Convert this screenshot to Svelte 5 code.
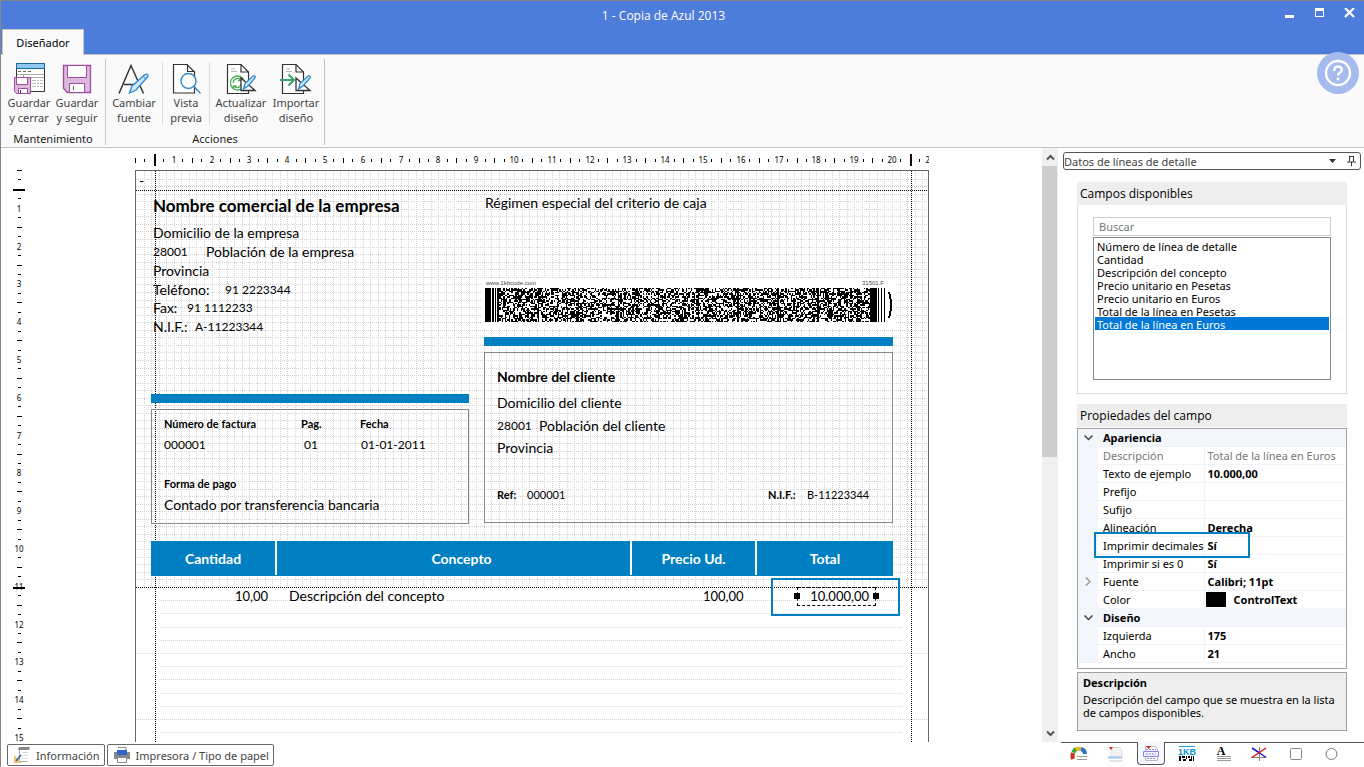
<script>
  import { onMount } from 'svelte';

  // A4 sheet at 96 dpi, all sheet coordinates are in px from its top left corner
  const CM = 37.8;
  const GRID = CM / 5;
  const SHEET_WIDTH = 794;
  const HEADER_END = 417;
  const BAND_STEP = 13.2;

  function ticks(count, margins) {
    const list = [];
    for (let i = 0; i <= count * 4; i++) {
      const pos = Math.round((i * CM) / 4);
      if (i > 0 && i % 4 === 0) {
        list.push({ pos, type: 'number', text: i / 4 });
      } else if (margins.includes(i)) {
        list.push({ pos, type: 'margin' });
      } else {
        list.push({ pos, type: i % 2 ? 'minor' : 'major' });
      }
    }
    return list;
  }

  const rulerX = ticks(21, [2, 82]);
  // the vertical ruler marks the end of the header at 11 cm as well
  const rulerY = [...ticks(22, [2]), { pos: HEADER_END, type: 'margin' }];

  const gridX = Array.from({ length: 105 }, (_, i) => Math.round((i + 1) * GRID));
  const gridY = Array.from({ length: 55 }, (_, i) => Math.round((i + 1) * GRID));
  const bands = Array.from({ length: 40 }, (_, i) => ({
    y: HEADER_END + Math.round((i + 1) * BAND_STEP),
    full: (i + 1) % 5 === 0
  }));

  // x, centre y, text and style of every field placed on the sheet
  const fields = [
    { x: 4, y: 11, text: '-' },
    { x: 18, y: 36, text: 'Nombre comercial de la empresa', kind: 'title' },
    { x: 350, y: 33, text: 'Régimen especial del criterio de caja' },
    { x: 18, y: 63, text: 'Domicilio de la empresa' },
    { x: 18, y: 82, text: '28001', kind: 'number' },
    { x: 71, y: 82, text: 'Población de la empresa' },
    { x: 18, y: 101, text: 'Provincia' },
    { x: 18, y: 120, text: 'Teléfono:' },
    { x: 90, y: 120, text: '91 2223344', kind: 'number' },
    { x: 18, y: 138, text: 'Fax:' },
    { x: 52, y: 138, text: '91 1112233', kind: 'number' },
    { x: 18, y: 157, text: 'N.I.F.:' },
    { x: 60, y: 157, text: 'A-11223344', kind: 'number' },
    { x: 29, y: 254, text: 'Número de factura', kind: 'label' },
    { x: 166, y: 254, text: 'Pag.', kind: 'label' },
    { x: 225, y: 254, text: 'Fecha', kind: 'label' },
    { x: 29, y: 275, text: '000001', kind: 'number' },
    { x: 169, y: 275, text: '01', kind: 'number' },
    { x: 226, y: 275, text: '01-01-2011', kind: 'number' },
    { x: 29, y: 314, text: 'Forma de pago', kind: 'label' },
    { x: 29, y: 335, text: 'Contado por transferencia bancaria' },
    { x: 362, y: 207, text: 'Nombre del cliente', kind: 'name' },
    { x: 362, y: 233, text: 'Domicilio del cliente' },
    { x: 362, y: 256, text: '28001', kind: 'number' },
    { x: 404, y: 256, text: 'Población del cliente' },
    { x: 362, y: 278, text: 'Provincia' },
    { x: 362, y: 325, text: 'Ref:', kind: 'label' },
    { x: 392, y: 325, text: '000001', kind: 'small' },
    { x: 633, y: 325, text: 'N.I.F.:', kind: 'label' },
    { x: 672, y: 325, text: 'B-11223344', kind: 'small' },
    { x: 100, y: 426, text: '10,00', kind: 'amount' },
    { x: 154, y: 426, text: 'Descripción del concepto' },
    { x: 568, y: 426, text: '100,00', kind: 'amount' }
  ];

  // 1KB code: framed blocks of random modules
  function barcodePath(cols, rows) {
    let seed = 31501;
    let d = '';
    for (let c = 0; c < cols; c++) {
      for (let r = 0; r < rows; r++) {
        seed = (seed * 1103515245 + 12345) % 2147483648;
        const on = c % 30 === 0 || (seed / 2147483648) < 0.53;
        if (on) d += `M${c} ${r}h1v1h-1z`;
      }
    }
    return d;
  }
  const barcode = barcodePath(280, 25);

  const available = [
    'Número de línea de detalle',
    'Cantidad',
    'Descripción del concepto',
    'Precio unitario en Pesetas',
    'Precio unitario en Euros',
    'Total de la línea en Pesetas',
    'Total de la línea en Euros'
  ];
  let selected = 'Total de la línea en Euros';
  let search = '';

  const properties = [
    { group: 'Apariencia' },
    { name: 'Descripción', value: 'Total de la línea en Euros', readonly: true },
    { name: 'Texto de ejemplo', value: '10.000,00' },
    { name: 'Prefijo', value: '' },
    { name: 'Sufijo', value: '' },
    { name: 'Alineación', value: 'Derecha' },
    { name: 'Imprimir decimales', value: 'Sí', marked: true },
    { name: 'Imprimir si es 0', value: 'Sí' },
    { name: 'Fuente', value: 'Calibri; 11pt', nested: true },
    { name: 'Color', value: 'ControlText', swatch: true },
    { group: 'Diseño' },
    { name: 'Izquierda', value: '175' },
    { name: 'Ancho', value: '21' }
  ];

  const tools = ['color', 'page', 'detail', 'code', 'text', 'line', 'rect', 'circle'];
  const toolNames = ['Colores', 'Página', 'Líneas de detalle', 'Código 1KB', 'Texto', 'Línea', 'Rectángulo', 'Círculo'];
  let activeTool = 'detail';

  onMount(() => {
    document.documentElement.lang = 'es';
  });
</script>

{#snippet sheetIcon()}
  <path d="M2.500 2.500H16l7.500 7.500V31.500H2.500z" fill="#fff" stroke="#333" stroke-width="1.200" />
  <path d="M16 2.500V10h7.500" fill="none" stroke="#333" stroke-width="1.200" />
  <path d="M6 7h4M6 9.500h6" stroke="#bbb" />
{/snippet}

{#snippet rulerPencil()}
  <path d="M16 16V28.500h14z" fill="#fff" stroke="#333" stroke-width="1.300" />
  <path d="M18.500 27l1.500-5.500L28 14q3-.5 2 2L23 24z" fill="#cfe6f8" stroke="#2b88cf" stroke-width="1.300" />
{/snippet}

<div class="window">
  <header>
    <div class="titlebar">
      <h1>1 - Copia de Azul 2013</h1>
      <div class="controls">
        <button aria-label="Minimizar"><svg width="11" height="11"><path d="M1 7h9v3H1z" fill="#fff" /></svg></button>
        <button aria-label="Maximizar"><svg width="11" height="11"><path d="M1 0h9v9H1zM2 3v5h7V3z" fill="#fff" fill-rule="evenodd" /></svg></button>
        <button aria-label="Cerrar"><svg width="11" height="11"><path d="M1 0l9 9M10 0l-9 9" stroke="#fff" stroke-width="2.200" /></svg></button>
      </div>
    </div>
    <button class="tab">Diseñador</button>
  </header>

  <div class="ribbon">
    <section class="group">
      <div class="commands first">
        <button class="command">
          <svg viewBox="0 0 32 32">
            <path d="M3.500 1.500h28v28h-28z" fill="#fff" stroke="#333" />
            <path d="M3.500 1.500h28v5h-28z" fill="#90c8f0" stroke="#1769aa" />
            <path d="M5 9.500h3m2 0h3m2 0h3" stroke="#666" />
            <path d="M4 12.500h27M10 15.500h21M10.500 12v7" stroke="#aaa" fill="none" />
            <path d="M19 18.500h4m1 0h2m1 0h3M19 21.500h4m1 0h2m1 0h3M19 24.500h4m1 0h2m1 0h3" stroke="#bbb" />
            <path d="M1.500 15.500h16v16h-14l-2-2z" fill="#dcb8dc" stroke="#a04ca0" />
            <path d="M3.500 15.500h11v7h-11z" fill="#fff" stroke="#a04ca0" />
            <path d="M5.500 31.500v-5h9v5z" fill="#fff" stroke="#a04ca0" />
            <path d="M7.500 28v3" stroke="#333" />
          </svg>
          <span>Guardar<br />y cerrar</span>
        </button>
        <button class="command">
          <svg viewBox="0 0 32 32">
            <path d="M2.500 3.500h27v27h-23l-4-4z" fill="#dcb8dc" stroke="#a04ca0" stroke-width="1.300" />
            <path d="M6.500 3.500h19v12h-19z" fill="#fff" stroke="#a04ca0" />
            <path d="M8.500 30.500v-9h15v9z" fill="#fff" stroke="#a04ca0" />
            <path d="M12.500 24v4" stroke="#555" />
          </svg>
          <span>Guardar<br />y seguir</span>
        </button>
      </div>
      <h2>Mantenimiento</h2>
    </section>
    <section class="group">
      <div class="commands last">
        <button class="command font">
          <svg viewBox="0 0 32 32">
            <path d="M1 31.500L13 3.500l12.500 28M6 22.500h14" fill="none" stroke="#333" stroke-width="1.500" />
            <path d="M11.500 31l2.500-7L27 12.500q3.500-1.500 3 2L18 28z" fill="#cfe6f8" stroke="#2b88cf" stroke-width="1.300" />
            <path d="M25 14l3 3.500" stroke="#2b88cf" />
          </svg>
          <span>Cambiar<br />fuente</span>
        </button>
        <button class="command">
          <svg viewBox="0 0 32 32">
            <path d="M3.500 2.500H17l7.500 7.500V31H3.500z" fill="#fff" stroke="#333" stroke-width="1.200" />
            <path d="M17.500 2.500V9.500h7" fill="none" stroke="#333" stroke-width="1.200" />
            <circle cx="18.500" cy="19" r="7.500" fill="#fff" stroke="#2b88cf" stroke-width="1.400" />
            <path d="M24 24.500l6.500 7" stroke="#2b88cf" stroke-width="1.400" />
          </svg>
          <span>Vista<br />previa</span>
        </button>
        <button class="command design">
          <svg viewBox="0 0 32 32">
            {@render sheetIcon()}
            <circle cx="12.500" cy="21" r="7" fill="#fff" stroke="#4caf50" stroke-width="1.300" />
            <path d="M8 21q1-5 6-4.500l2 1.500M16 15.500V18.500h-3M16.500 22q-1.500 4-5.500 3.500L8.500 24M8.500 26.500V24h3" fill="none" stroke="#4caf50" stroke-width="1.300" />
            {@render rulerPencil()}
          </svg>
          <span>Actualizar<br />diseño</span>
        </button>
        <button class="command">
          <svg viewBox="0 0 32 32">
            {@render sheetIcon()}
            <path d="M0 18h14M8.500 12.500l5.500 5.500-5.500 5.500" fill="none" stroke="#35a56a" stroke-width="2" />
            {@render rulerPencil()}
          </svg>
          <span>Importar<br />diseño</span>
        </button>
      </div>
      <h2>Acciones</h2>
    </section>
    <button class="help" aria-label="Ayuda">
      <svg viewBox="0 0 42 42">
        <circle cx="21" cy="21" r="12" fill="none" stroke="#fff" stroke-width="2.400" />
        <path d="M17.300 19q0-4.500 3.700-4.500t3.700 3.400q0 1.800-2 3-1.700.9-1.700 2.600" fill="none" stroke="#fff" stroke-width="2.400" />
        <circle cx="21" cy="27" r="1.400" fill="#fff" />
      </svg>
    </button>
  </div>

  <div class="body">
    <main>
      <div class="workspace">
        <div class="ruler vertical">
          {#each rulerY as tick}
            <span class={tick.type} style="top: {tick.pos}px">{tick.text ?? ''}</span>
          {/each}
        </div>
        <div class="desk">
          <div class="ruler horizontal">
            {#each rulerX as tick}
              <span class={tick.type} style="left: {tick.pos}px">{tick.text ?? ''}</span>
            {/each}
          </div>
          <div class="sheet">
            <svg class="grid" width={SHEET_WIDTH} height="1122" shape-rendering="crispEdges">
              <g stroke="#d4d4d4" stroke-dasharray="1 1">
                {#each gridX as x}
                  <path d="M{x}.5 0V{HEADER_END}" />
                {/each}
                {#each gridY as y}
                  <path d="M0 {y}.5H{SHEET_WIDTH}" />
                {/each}
                {#each bands as band}
                  <path d="M{band.full ? 0 : 25} {band.y - 1}.5H{band.full ? SHEET_WIDTH : 767}" />
                {/each}
              </g>
              <g stroke="#000" stroke-dasharray="1 1">
                <path d="M0 19.500H794M0 {HEADER_END - 1}.5H794M19.500 0V1122M775.500 0V1122" />
              </g>
            </svg>

            <div class="bar" style="left: 15px; top: 223px; width: 318px"></div>
            <div class="bar" style="left: 348px; top: 166px; width: 409px"></div>
            <div class="frame" style="left: 15px; top: 238px; width: 318px; height: 115px"></div>
            <div class="frame" style="left: 348px; top: 181px; width: 409px; height: 171px"></div>

            <div class="barcode">
              <div class="barcode-text"><span>www.1kbcode.com</span><span>31501.F</span></div>
              <svg viewBox="0 0 410 34" shape-rendering="crispEdges">
                <path d="M0 0h6v34H0zM7 0h2v34H7zM10 0h1v34h-1zM12 0h1v34h-1zM385 0h7v34h-7zM393 0h1v34h-1zM396 0h1v34h-1zM399 0h1v34h-1z" />
                <g transform="translate(13 0) scale(1.33 1.36)"><path d={barcode} /></g>
                <path d="M404 4q4 13 0 26" fill="none" stroke="#000" stroke-width="2" />
              </svg>
            </div>

            <div class="columns">
              <span>Cantidad</span><span class="concept">Concepto</span><span>Precio Ud.</span><span>Total</span>
            </div>

            {#each fields as field}
              <span class="field {field.kind ?? ''}" style="left: {field.x}px; top: {field.y}px">{field.text}</span>
            {/each}

            <div class="callout"></div>
            <div class="selection">10.000,00</div>
          </div>
        </div>
        <div class="scrollbar">
          <button aria-label="Subir"><svg width="9" height="7"><path d="M1 5.500l3.500-3.500L8 5.500" fill="none" stroke="#555" stroke-width="2" /></svg></button>
          <div class="thumb"></div>
          <button aria-label="Bajar"><svg width="9" height="7"><path d="M1 1.500L4.500 5 8 1.500" fill="none" stroke="#555" stroke-width="2" /></svg></button>
        </div>
      </div>
      <footer>
        <button>
          <svg width="18" height="18">
            <path d="M6 1h11l-1 3H5z" fill="#888" />
            <path d="M6.500 4v11.500h8" fill="none" stroke="#aaa" />
            <path d="M9 6.500h6M9 9.500h6M9 12.500h6" stroke="#ddd" />
            <path d="M1 9v8h8z" fill="#f5c26b" />
            <path d="M3 15l5-6" stroke="#29628f" stroke-width="1.500" />
          </svg>
          Información
        </button>
        <button>
          <svg width="18" height="18">
            <path d="M5 1.500h8V5" fill="#fff" stroke="#888" />
            <path d="M1 6h16v7H1z" fill="#888" />
            <path d="M4 4h10v5H4z" fill="#2f66cc" />
            <path d="M4.500 11.500h9v5h-9z" fill="#fff" stroke="#888" />
          </svg>
          Impresora / Tipo de papel
        </button>
      </footer>
    </main>

    <aside>
      <div class="picker">
        <select aria-label="Sección">
          <option>Datos de líneas de detalle</option>
        </select>
        <svg width="7" height="4"><path d="M0 0h7L3.500 4z" fill="#333" /></svg>
        <button aria-label="Fijar panel"><svg width="9" height="10"><path d="M2.500 0v5.500M6.500 0v5.500M2 .5h5M0 6h9M4.500 6v4" fill="none" stroke="#333" /></svg></button>
      </div>

      <div class="panels">
        <h2>Campos disponibles</h2>
        <div class="available">
          <input type="text" placeholder="Buscar" aria-label="Buscar" bind:value={search} />
          <select size="10" aria-label="Campos disponibles" bind:value={selected}>
            {#each available as name}
              <option value={name}>{name}</option>
            {/each}
          </select>
        </div>

        <h2>Propiedades del campo</h2>
        <div class="properties">
          <table>
            <colgroup>
              <col class="gutter-col" />
              <col class="name-col" />
              <col />
            </colgroup>
            <tbody>
              {#each properties as row}
                {#if row.group}
                  <tr class="heading">
                    <td class="gutter"><button aria-label="Contraer {row.group}"><svg width="9" height="6"><path d="M.5 .5l4 4 4-4" fill="none" stroke="#444" stroke-width="1.500" /></svg></button></td>
                    <th colspan="2">{row.group}</th>
                  </tr>
                {:else}
                  <tr class:readonly={row.readonly}>
                    <td class="gutter">
                      {#if row.nested}
                        <button aria-label="Expandir {row.name}"><svg width="6" height="9"><path d="M1 .5l4 4-4 4" fill="none" stroke="#999" stroke-width="1.500" /></svg></button>
                      {/if}
                    </td>
                    <th scope="row" class:marked={row.marked}>{row.name}</th>
                    <td class="value">{#if row.swatch}<i class="swatch"></i>{/if}{row.value}</td>
                  </tr>
                {/if}
              {/each}
            </tbody>
          </table>
        </div>

        <div class="hint">
          <strong>Descripción</strong>
          <p>Descripción del campo que se muestra en la lista de campos disponibles.</p>
        </div>
      </div>

      <nav>
        {#each tools as tool, i}
          <button class:active={activeTool === tool} aria-label={toolNames[i]} onclick={() => (activeTool = tool)}>
            <svg width="18" height="16" viewBox="0 0 18 16">
              {#if tool === 'color'}
                <path d="M3 13q-1-3 0-6" fill="none" stroke="#d9261c" stroke-width="4" />
                <path d="M3 6.500l3-4" stroke="#35a53f" stroke-width="4" />
                <path d="M6 3.500q3-1.500 5 0" fill="none" stroke="#f0b51d" stroke-width="4" />
                <path d="M11 3q4 1 4 5" fill="none" stroke="#2c74c9" stroke-width="4" />
                <path d="M7 10.500h10M7 13.500h10" stroke="#999" />
              {:else if tool === 'page'}
                <path d="M5 1.500h9l2 3v7H5z" fill="#f2f2f2" stroke="#ddd" />
                <path d="M3 1h4L5 4z" fill="#d9261c" />
                <path d="M2 11.500h14" stroke="#9cc6f0" stroke-width="2" />
                <path d="M3 15h14" stroke="#ccc" />
              {:else if tool === 'detail'}
                <path d="M3.500 15.500V1.500h10l2 3v11z" fill="#fff" stroke="#bbb" />
                <path d="M4 1h5L6.500 4z" fill="#d9261c" />
                <path d="M1.500 6.500h15v5h-15z" fill="#f4f2ff" stroke="#8a84e8" />
                <path d="M4 4.500h10M4 9h10M5 13.500h9" stroke="#8a84e8" stroke-dasharray="2 1" />
              {:else if tool === 'code'}
                <path d="M1 .5h16" stroke="#19a5dc" />
                <text x="9" y="9" text-anchor="middle">1KB</text>
                <path d="M1 10h2v5H1zM4 10h3v2H4zM5 13h3v2H5zM8 10h1v3H8zM10 10h2v2h-2zM11 13h3v2h-3zM13 10h1v3h-1zM15 10h1v5h-1z" />
              {:else if tool === 'text'}
                <text class="letter" x="7" y="9" text-anchor="middle">A</text>
                <path d="M3 10.500h14M3 12.500h14M3 14.500h14" stroke="#999" />
              {:else if tool === 'line'}
                <path d="M9.500 1v14M1 11.500h15" stroke="#888" />
                <path d="M2 2l7 4.500" stroke="#1414e0" stroke-width="1.500" />
                <path d="M9 6.500l7 5" stroke="#1414e0" stroke-width="1.500" />
                <path d="M16 2L2 11.500" stroke="#e01414" stroke-width="1.500" />
              {:else if tool === 'rect'}
                <rect x="4.500" y="2.500" width="11" height="11" rx="1" fill="#fff" stroke="#888" />
              {:else}
                <circle cx="9.500" cy="8" r="5.500" fill="#fff" stroke="#777" />
              {/if}
            </svg>
          </button>
        {/each}
      </nav>
    </aside>
  </div>
</div>

<style>
  :global(body) {
    margin: 0;
    background: #fff;
  }

  .window {
    display: flex;
    flex-direction: column;
    box-sizing: border-box;
    height: 100vh;
    border: solid #868686;
    border-width: 1px 0 0 1px;
    font-family: 'Noto Sans', 'Open Sans', sans-serif;
    font-size: 11px;
    color: #000;
    overflow: hidden;
  }

  button {
    padding: 0;
    border: 0;
    background: none;
    font: inherit;
    color: inherit;
  }

  h1,
  h2 {
    margin: 0;
    font-weight: normal;
  }

  svg {
    display: block;
    flex: none;
  }

  /* title bar */
  header {
    background: #4d7cdb;
  }

  .titlebar {
    display: flex;
    height: 28px;
    color: #fff;
  }

  .titlebar h1 {
    flex: 1;
    padding-left: 52px;
    font-family: 'Open Sans', sans-serif;
    font-size: 12px;
    line-height: 29px;
    text-align: center;
  }

  .controls {
    display: flex;
    height: 24px;
  }

  .controls button {
    display: grid;
    place-items: center;
    width: 30px;
  }

  .tab {
    position: relative;
    z-index: 1;
    display: block;
    width: 82px;
    height: 26px;
    margin: 0 0 -1px 1px;
    border: 1px solid #c8c8c8;
    border-bottom: 0;
    background: #fafafa;
    color: #000;
  }

  /* ribbon */
  .ribbon {
    position: relative;
    display: flex;
    border: solid #c4c4c4;
    border-width: 1px 0;
    background: #fafafa;
  }

  .group {
    margin: 4px 0 2px;
    border-right: 1px solid #c4c4c4;
  }

  .group h2 {
    font-size: 11px;
    line-height: 12px;
    text-align: center;
    color: #222;
  }

  .commands {
    display: flex;
    padding: 3px 0 8px;
  }

  .commands.first {
    padding-left: 4px;
    padding-right: 4px;
  }

  .commands.last {
    padding-right: 4px;
  }

  .command {
    display: flex;
    flex-direction: column;
    align-items: center;
    gap: 1px;
    width: 48px;
    line-height: 15px;
    color: #444;
  }

  .command svg {
    width: 32px;
    height: 32px;
  }

  .command.font {
    width: 56px;
    box-shadow: 1px 0 #dcdcdc;
  }

  .command.design {
    width: 62px;
    box-shadow: -1px 0 #dcdcdc;
  }

  .help {
    position: absolute;
    top: -3px;
    right: 5px;
    width: 42px;
    height: 42px;
    border-radius: 50%;
    background: #a6bbed;
  }

  /* design area */
  .body {
    display: flex;
    flex: 1;
    min-height: 0;
  }

  main {
    display: flex;
    flex: 1;
    flex-direction: column;
    min-width: 0;
  }

  .workspace {
    display: flex;
    flex: 1;
    min-height: 0;
  }

  .ruler {
    position: relative;
    overflow: hidden;
    font-size: 8px;
    line-height: 10px;
  }

  .ruler span {
    position: absolute;
    background: #000;
  }

  .ruler .number {
    background: none;
  }

  .vertical {
    width: 24px;
    margin-top: 22px;
  }

  .vertical span {
    left: 16px;
    width: 5px;
    height: 1px;
  }

  .vertical .minor {
    left: 17px;
    width: 3px;
  }

  .vertical .margin {
    left: 12px;
    width: 12px;
    height: 2px;
  }

  .vertical .number {
    left: 12px;
    width: 12px;
    height: 10px;
    margin-top: -4px;
    text-align: center;
  }

  .desk {
    display: flex;
    flex: 1;
    flex-direction: column;
    align-items: center;
    padding-right: 3px;
    overflow: hidden;
  }

  .horizontal {
    flex: none;
    width: 794px;
    height: 14px;
    margin: 6px 0 2px;
  }

  .horizontal span {
    top: 4px;
    width: 1px;
    height: 5px;
  }

  .horizontal .minor {
    top: 5px;
    height: 3px;
  }

  .horizontal .margin {
    top: 0;
    width: 2px;
    height: 12px;
  }

  .horizontal .number {
    top: 1px;
    width: 12px;
    height: 10px;
    margin-left: -5px;
    text-align: center;
  }

  .sheet {
    position: relative;
    flex: none;
    box-sizing: border-box;
    width: 794px;
    height: 1123px;
    border: 1px solid #666;
    font-family: Lato, 'Open Sans', sans-serif;
    font-size: 14px;
  }

  .grid {
    position: absolute;
    max-width: 100%;
  }

  .bar {
    position: absolute;
    height: 9px;
    background: #0080c3;
  }

  .frame {
    position: absolute;
    box-sizing: border-box;
    border: 1px solid #888;
  }

  .barcode {
    position: absolute;
    left: 346px;
    top: 108px;
    width: 414px;
    height: 49px;
    background: #fff;
  }

  .barcode svg {
    width: 410px;
    height: 34px;
    margin-left: 3px;
  }

  .barcode-text {
    display: flex;
    justify-content: space-between;
    padding: 0 12px 0 4px;
    font: 6px/9px 'Liberation Sans', sans-serif;
    color: #444;
  }

  .columns {
    position: absolute;
    left: 15px;
    top: 370px;
    display: grid;
    grid-template-columns: 124px 353px 123px 136px;
    gap: 2px;
    background: linear-gradient(#0080c3, #0080c3) bottom / 100% 1px no-repeat #fff;
    font-weight: bold;
    line-height: 35px;
    text-align: center;
    color: #fff;
  }

  .columns span {
    background: #0080c3;
  }

  .columns .concept {
    padding-left: 16px;
  }

  .field {
    position: absolute;
    margin: -11px 0 0 -1px;
    line-height: 20px;
    white-space: pre;
  }

  .field.title {
    font-size: 17px;
    font-weight: bold;
  }

  .field.name {
    font-weight: bold;
  }

  .field.number {
    font-size: 12px;
  }

  .field.amount {
    font-size: 13px;
  }

  .field.label {
    font-size: 11px;
    font-weight: bold;
  }

  .field.small {
    font-size: 11px;
  }

  .callout {
    position: absolute;
    left: 635px;
    top: 407px;
    width: 125px;
    height: 34px;
    border: 2px solid #0080c3;
  }

  .selection {
    position: absolute;
    left: 661px;
    top: 416px;
    box-sizing: border-box;
    width: 79px;
    height: 19px;
    padding-right: 6px;
    border: 1px dashed #000;
    font-size: 13px;
    line-height: 17px;
    text-align: right;
  }

  .selection::before,
  .selection::after {
    position: absolute;
    top: 5px;
    left: -4px;
    width: 6px;
    height: 6px;
    background: #000;
    content: '';
  }

  .selection::after {
    right: -4px;
    left: auto;
  }

  .scrollbar {
    display: flex;
    flex-direction: column;
    width: 16px;
    background: #f0f0f0;
  }

  .scrollbar button {
    display: grid;
    place-items: center;
    height: 18px;
  }

  .thumb {
    height: 49%;
    margin: 0 1px auto 0;
    background: #cdcdcd;
  }

  footer {
    display: flex;
    gap: 2px;
    padding: 2px 0 1px 6px;
    color: #444;
  }

  footer button {
    display: flex;
    align-items: center;
    gap: 5px;
    height: 22px;
    padding: 0 4px 0 5px;
    border: 1px solid #666;
    border-radius: 2px;
    background: #fff;
  }

  /* side panel */
  aside {
    display: flex;
    flex: none;
    flex-direction: column;
    width: 303px;
    margin-left: 3px;
  }

  .picker {
    display: flex;
    align-items: center;
    height: 16px;
    margin: 4px 3px 0 2px;
    border: 1px solid #555;
    border-radius: 3px;
  }

  .picker select {
    flex: 1;
    padding: 0;
    border: 0;
    appearance: none;
    background: none;
    font: inherit;
    color: #444;
  }

  .picker button {
    margin: 0 4px 0 11px;
  }

  .panels {
    display: flex;
    flex: 1;
    flex-direction: column;
    padding: 12px 17px 11px 16px;
    min-height: 0;
  }

  .panels h2 {
    padding-left: 3px;
    background: #eee;
    font-family: 'Open Sans', sans-serif;
    font-size: 12px;
    line-height: 23px;
  }

  .available {
    display: flex;
    flex-direction: column;
    gap: 1px;
    margin-bottom: 10px;
    padding: 12px 15px 13px;
    border: solid #ddd;
    border-width: 0 1px 1px;
  }

  .available input {
    height: 17px;
    padding: 0 5px;
    border: 1px solid #ccc;
    font: inherit;
  }

  .available input::placeholder {
    color: #777;
  }

  .available select {
    height: 143px;
    padding: 1px;
    border: 1px solid #828790;
    border-radius: 0;
    background: #fff;
    font: inherit;
    overflow: hidden;
    outline: 0;
    color: #000;
  }

  .available option {
    height: 13px;
    min-height: 13px;
    padding: 0 2px;
    line-height: 13px;
  }

  .available option:checked {
    background: linear-gradient(#0078d7, #0078d7);
    color: #fff;
  }

  .properties {
    flex: 1;
    margin-top: 1px;
    border: 1px solid #a0a0a0;
    overflow: hidden;
  }

  table {
    width: 100%;
    border-collapse: collapse;
    table-layout: fixed;
  }

  .gutter-col {
    width: 20px;
  }

  .name-col {
    width: 106px;
  }

  td,
  th {
    height: 17px;
    padding: 0;
    border-bottom: 1px solid #f0f3f9;
    line-height: 17px;
    white-space: nowrap;
  }

  th {
    padding-left: 5px;
    font-weight: normal;
    text-align: left;
  }

  .heading th {
    font-weight: bold;
  }

  .heading,
  .gutter {
    background: #f3f6fb;
  }

  .gutter button {
    display: block;
    margin: 0 auto;
  }

  .value {
    padding-left: 3px;
    border-left: 1px solid #f0f3f9;
    font-weight: bold;
  }

  .readonly,
  .readonly .value {
    font-weight: normal;
    color: #777;
  }

  .marked {
    position: relative;
  }

  .marked::after {
    position: absolute;
    left: -4px;
    top: -5px;
    width: 152px;
    height: 22px;
    border: 2px solid #0080c3;
    content: '';
  }

  .swatch {
    display: inline-block;
    width: 20px;
    height: 15px;
    margin: 1px 8px 0 -2px;
    background: #000;
    vertical-align: top;
  }

  .hint {
    height: 57px;
    margin-top: 3px;
    padding: 0 5px;
    border: 1px solid #a0a0a0;
    background: #eee;
    line-height: 13px;
  }

  .hint strong {
    display: block;
    line-height: 20px;
  }

  .hint p {
    margin: 0;
  }

  nav {
    display: flex;
    height: 24px;
    padding-right: 15px;
    border-top: 1px solid #555;
    justify-content: space-around;
  }

  nav button {
    display: grid;
    place-items: center;
    width: 28px;
    height: 23px;
    margin-top: -1px;
  }

  nav .active {
    box-sizing: border-box;
    border: 1px solid #555;
    border-top: 0;
    border-radius: 0 0 4px 4px;
    background: #f7f7ff;
  }

  nav text {
    font: bold 9px 'Liberation Sans', sans-serif;
    fill: #0d96cf;
  }

  nav .letter {
    font: bold 12px 'Liberation Serif', serif;
    fill: #000;
  }
</style>
